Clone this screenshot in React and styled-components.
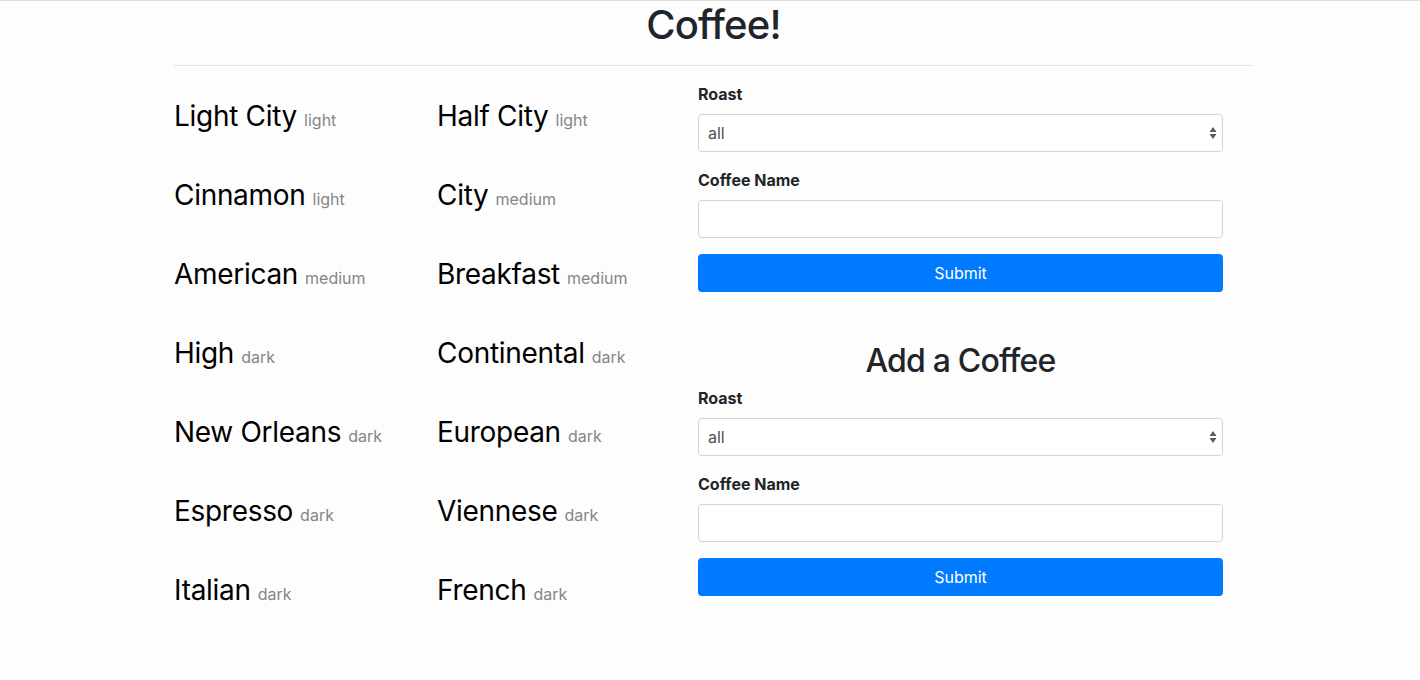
import styled, { createGlobalStyle } from "styled-components";

const coffees = [
  { name: "Light City", roast: "light" },
  { name: "Half City", roast: "light" },
  { name: "Cinnamon", roast: "light" },
  { name: "City", roast: "medium" },
  { name: "American", roast: "medium" },
  { name: "Breakfast", roast: "medium" },
  { name: "High", roast: "dark" },
  { name: "Continental", roast: "dark" },
  { name: "New Orleans", roast: "dark" },
  { name: "European", roast: "dark" },
  { name: "Espresso", roast: "dark" },
  { name: "Viennese", roast: "dark" },
  { name: "Italian", roast: "dark" },
  { name: "French", roast: "dark" },
];

const GlobalStyle = createGlobalStyle`
  * { box-sizing: border-box; }
  body {
    margin: 0;
    background: #fdfdfd;
    font-family: Inter, "Liberation Sans", sans-serif;
    color: #212529;
    font-size: 16px;
    line-height: 1.5;
  }
`;

//select arrows, like the ones mac draws
const Arrows = () => (
  <svg width="8" height="14" viewBox="0 0 8 14">
    <path d="M4 1 L7.5 6 L0.5 6 Z" fill="#555b61" />
    <path d="M4 13 L7.5 8 L0.5 8 Z" fill="#555b61" />
  </svg>
);

const RoastForm = ({ title }) => {
  return (
    <Form>
      {title && <SubTitle>{title}</SubTitle>}
      <Group>
        <Label>Roast</Label>
        <SelectBox>
          <span>all</span>
          <Arrows />
        </SelectBox>
      </Group>
      <Group>
        <Label>Coffee Name</Label>
        <Input type="text" />
      </Group>
      <Button>Submit</Button>
    </Form>
  );
};

const App = () => {
  return (
    <Page>
      <GlobalStyle />
      <Container>
        <Title>Coffee!</Title>
        <Rule />
        <Row>
          <CoffeeList>
            {coffees.map((coffee) => (
              <CoffeeItem key={coffee.name}>
                <CoffeeName>{coffee.name}</CoffeeName>
                <Roast>{coffee.roast}</Roast>
              </CoffeeItem>
            ))}
          </CoffeeList>
          <Forms>
            <RoastForm />
            <RoastForm title="Add a Coffee" />
          </Forms>
        </Row>
      </Container>
    </Page>
  );
};

export default App;

const Page = styled.div`
  border-top: 1px solid #dcdcdc;
  min-height: 680px;
`;

const Container = styled.div`
  width: 1079px;
  margin-left: 174px;
`;

const Title = styled.h1`
  margin: 0;
  text-align: center;
  font-size: 40px;
  font-weight: 500;
  line-height: 48px;
  letter-spacing: -0.8px;
  color: #212529;
`;

const Rule = styled.hr`
  margin: 16px 0;
  border: 0;
  border-top: 1px solid #e3e3e3;
`;

const Row = styled.div`
  display: grid;
  grid-template-columns: 524px 525px;
`;

const CoffeeList = styled.div`
  display: grid;
  grid-template-columns: 263px 261px;
  row-gap: 45px;
  padding-top: 17px;
  align-content: start;
`;

const CoffeeItem = styled.div`
  display: flex;
  align-items: baseline;
  gap: 7px;
  height: 34px;
  white-space: nowrap;
`;

const CoffeeName = styled.span`
  font-size: 28px;
  line-height: 34px;
  letter-spacing: -0.3px;
  color: #000;
`;

const Roast = styled.span`
  font-size: 16px;
  color: #858585;
`;

const Forms = styled.div`
  display: flex;
  flex-direction: column;
  gap: 48px;
`;

const Form = styled.div`
  display: flex;
  flex-direction: column;
`;

const SubTitle = styled.h2`
  margin: 0 0 6px;
  padding-top: 2px;
  text-align: center;
  font-size: 32px;
  font-weight: 500;
  line-height: 38px;
  letter-spacing: -0.8px;
  color: #212529;
`;

const Group = styled.div`
  margin-bottom: 16px;
`;

const Label = styled.div`
  font-weight: 700;
  font-size: 16px;
  line-height: 24px;
  margin-bottom: 8px;
  color: #212529;
`;

const SelectBox = styled.div`
  height: 38px;
  display: flex;
  align-items: center;
  justify-content: space-between;
  padding: 0 5px 0 9px;
  border: 1px solid #ced4da;
  border-radius: 4px;
  background: #fff;
  color: #495057;
  font-size: 16px;
`;

const Input = styled.input`
  display: block;
  width: 100%;
  height: 38px;
  border: 1px solid #ced4da;
  border-radius: 4px;
  background: #fff;
  font-family: inherit;
  font-size: 16px;
  padding: 6px 12px;
  outline: none;
`;

const Button = styled.button`
  height: 38px;
  width: 100%;
  border: 0;
  border-radius: 4px;
  background: #007bff;
  color: #fff;
  font-family: inherit;
  font-size: 16px;
  cursor: pointer;
`;
